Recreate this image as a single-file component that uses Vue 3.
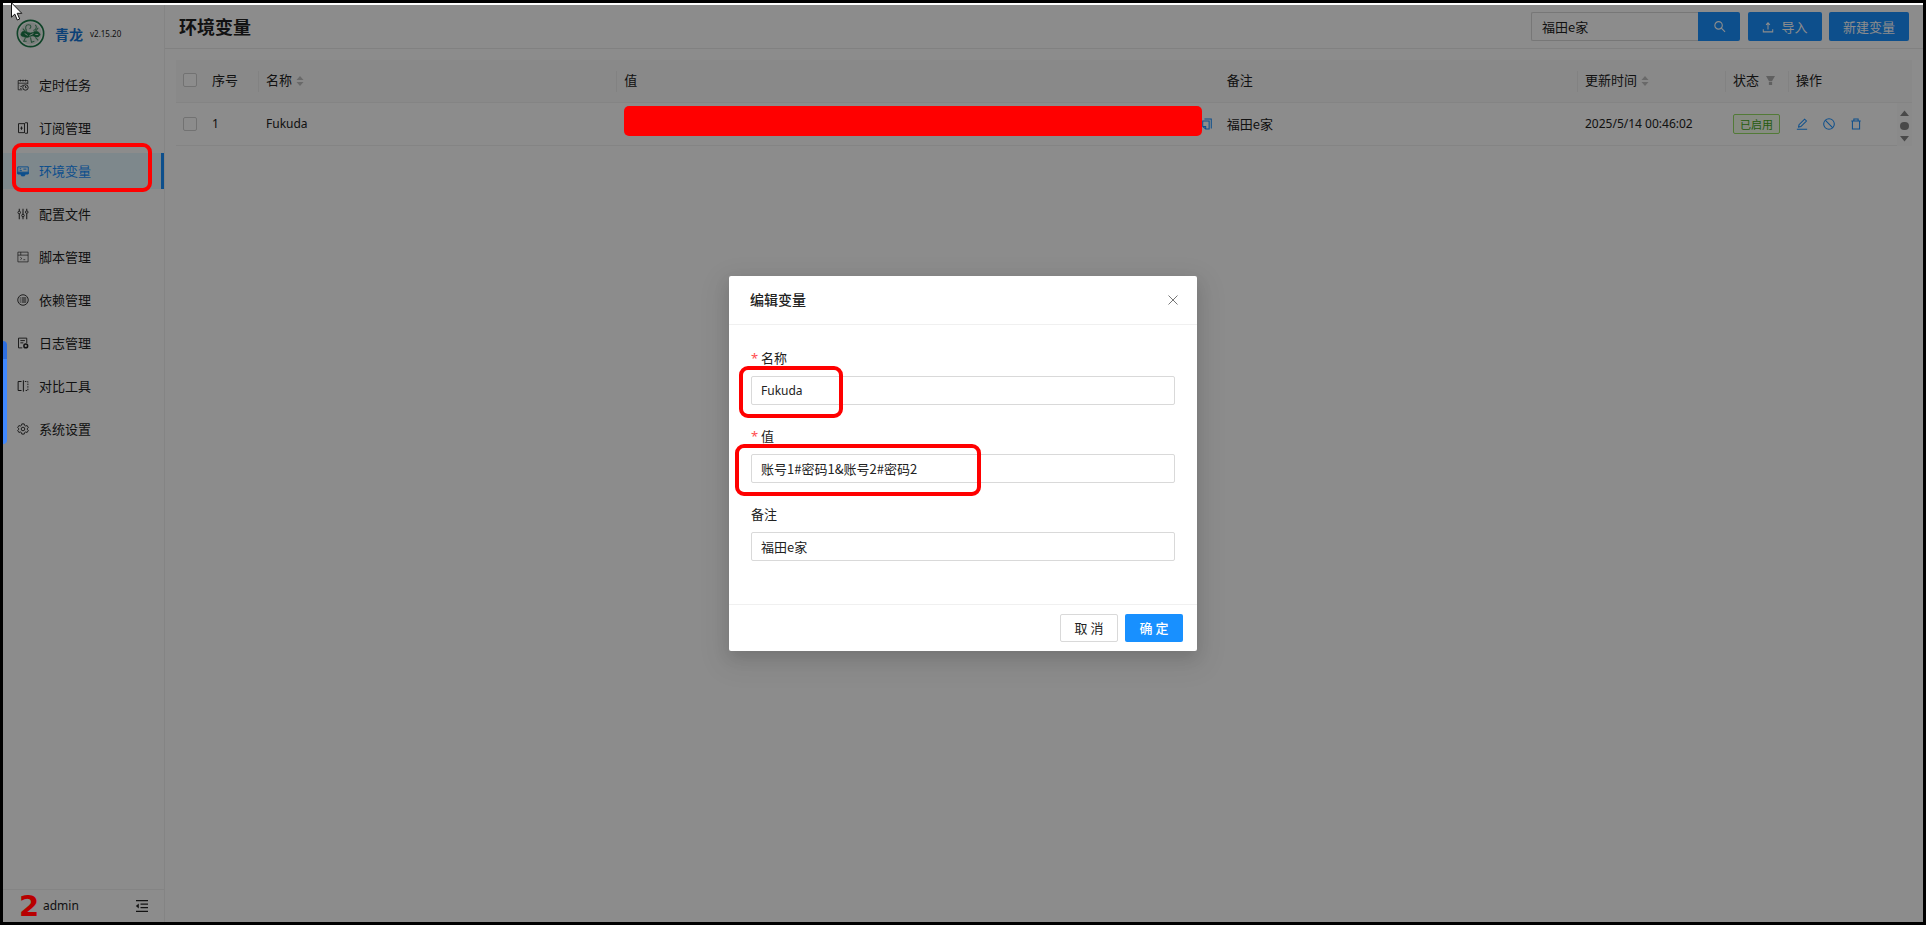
<script setup>
import { ref } from 'vue'

const menu = [
  { label: '定时任务', icon: 'task' },
  { label: '订阅管理', icon: 'subs' },
  { label: '环境变量', icon: 'env', active: true },
  { label: '配置文件', icon: 'config' },
  { label: '脚本管理', icon: 'script' },
  { label: '依赖管理', icon: 'deps' },
  { label: '日志管理', icon: 'log' },
  { label: '对比工具', icon: 'diff' },
  { label: '系统设置', icon: 'setting' },
]
const search = ref('福田e家')
const form = ref({ name: 'Fukuda', value: '账号1#密码1&账号2#密码2', remark: '福田e家' })
</script>

<template>
  <div class="screen">
    <div class="app">
      <aside class="sidebar">
        <div class="brand">
          <svg class="logo" viewBox="0 0 30 30" fill="none" stroke="#1d7a49">
            <circle cx="15" cy="15" r="13.6" stroke-width="1.7" />
            <circle cx="15" cy="15" r="11.4" fill="#dfe8e2" stroke="none" />
            <path d="M5 16c1-4 4-4 6-3 2 2 6 2 8 0 2-1 5 0 6 3-1 3-4 3-6 2-3-2-6 2-9 1-3-1-5-1-5-3z" fill="#1d7a49" stroke-width=".6" />
            <path d="M11 12C9 9 10 6 13 6c3 0 3 3 1 4M18 12c3-1 4-4 2-6M7 10l3 3M23 9l-3 4M10 19l-2 4 3 0M15 19l1 5 3-1M20 19l3 3" stroke="#4a9069" stroke-width="1.1" />
            <path d="M9 15l3 2M14 17l4-2M20 16h3" stroke="#dfe8e2" stroke-width="1" />
          </svg>
          <a class="name" href="#">青龙</a>
          <span class="version">v2.15.20</span>
        </div>
        <nav>
          <ul class="menu">
            <li v-for="m in menu" :key="m.label" :class="{ active: m.active }">
              <a href="#">
                <svg viewBox="0 0 16 16" fill="none" stroke="currentColor" stroke-width="1.2">
                  <template v-if="m.icon === 'task'">
                    <path d="M7 14.4H1.6V2h12.8v5M1.6 5.6h12.8M4.6.8v2.6M8 .8v2.6M11.4.8v2.6M4 9l1.5 1.5L8 7.5M4 12.5h2" stroke-width="1" />
                    <circle cx="11.3" cy="11.3" r="3.6" /><path d="M11.3 9.3v2.2h1.6" />
                  </template>
                  <template v-else-if="m.icon === 'subs'">
                    <path d="M2 2.2h8v12H2zM10 2.2l1-1.2h3v14h-3l-1-1M6 6v4.4M4.4 8.2h3.2" />
                  </template>
                  <template v-else-if="m.icon === 'env'">
                    <path d="M1 2.5h14v9H1zM3.5 5h2M3.5 7.5h3M8.5 5.5h4" stroke-width="1.3" />
                    <path d="M1 9.5h14v2.5h-4l-1 2.5H6L5 12H1z" fill="currentColor" />
                  </template>
                  <template v-else-if="m.icon === 'config'">
                    <path d="M3 1v3M3 8v7M8 1v7M8 12v3M13 1v2.5M13 7.5V15" stroke-width="1.3" />
                    <circle cx="3" cy="6" r="1.7" /><circle cx="8" cy="10" r="1.7" /><circle cx="13" cy="5.5" r="1.7" />
                  </template>
                  <template v-else-if="m.icon === 'script'">
                    <path d="M1.2 1.5h13.6v13H1.2zM1.2 5.5h13.6M5 1.5v4M4.5 8.5L6.5 10l-2 1.6M8.5 11.6H11" stroke-width=".9" />
                  </template>
                  <template v-else-if="m.icon === 'deps'">
                    <circle cx="8" cy="8" r="7" />
                    <path d="M3.6 5.4h1.4M6.2 5.4h6.2M3.6 8h1.4M6.2 8h6.2M3.6 10.6h1.4M6.2 10.6h6.2" stroke-width="1.5" />
                  </template>
                  <template v-else-if="m.icon === 'log'">
                    <path d="M7 14.5H2v-13h11V8M4.5 4.8h6M4.5 7.8h4" />
                    <circle cx="11.7" cy="11.9" r="2.5" stroke-width="2" />
                  </template>
                  <template v-else-if="m.icon === 'diff'">
                    <path d="M6 2H1.5v12H6M8.5.5v15" stroke-width="1.3" />
                    <path d="M10.5 2h4v12h-4" stroke-dasharray="2 1.4" />
                  </template>
                  <template v-else>
                    <path d="M6.4 1.2h3.2l.5 2 1.4.8 2-.6 1.6 2.8L13.6 7.6v.8l1.5 1.4-1.6 2.8-2-.6-1.4.8-.5 2H6.4l-.5-2-1.4-.8-2 .6L.9 9.8l1.5-1.4v-.8L.9 6.2l1.6-2.8 2 .6 1.4-.8z" />
                    <circle cx="8" cy="8" r="2.4" />
                  </template>
                </svg>
                <span>{{ m.label }}</span>
              </a>
              <i v-if="m.active" class="mark"></i>
            </li>
          </ul>
        </nav>
        <div class="user">
          <span class="avatar">2</span>
          <span class="who">admin</span>
          <button class="fold" aria-label="收起菜单">
            <svg viewBox="0 0 14 14" fill="none" stroke="currentColor" stroke-width="1.3">
              <path d="M1 1.7h12M5.5 5.2H13M5.5 8.7H13M1 12.3h12" /><path d="M3.8 4.6v4.8L.8 7z" fill="currentColor" stroke="none" />
            </svg>
          </button>
        </div>
      </aside>

      <main class="main">
        <header class="topbar">
          <h1>环境变量</h1>
          <form class="search" @submit.prevent>
            <input v-model="search" type="text" aria-label="搜索变量" />
            <button class="primary" aria-label="搜索">
              <svg viewBox="0 0 14 14" fill="none" stroke="currentColor" stroke-width="1.2"><circle cx="6" cy="5.8" r="4" /><path d="M9 8.800l4 4" /></svg>
            </button>
          </form>
          <button class="primary import">
            <svg viewBox="0 0 14 14" fill="none" stroke="currentColor" stroke-width="1.2"><path d="M1.5 9.5v3.2h11V9.5M7 10V2.500M4.800 4.500L7 2l2.200 2.500" /></svg>
            导入
          </button>
          <button class="primary create">新建变量</button>
        </header>

        <div class="list">
          <table>
            <colgroup>
              <col class="c-check" /><col class="c-index" /><col /><col class="c-value" /><col />
              <col class="c-time" /><col class="c-state" /><col class="c-ops" /><col class="c-bar" />
            </colgroup>
            <thead>
              <tr>
                <th><input type="checkbox" aria-label="全选" /></th>
                <th class="sep">序号</th>
                <th class="sep">名称 <svg class="sorter" viewBox="0 0 8 12"><path d="M4 1l3.5 4h-7zM4 11L.5 7h7z" /></svg></th>
                <th>值</th>
                <th class="sep">备注</th>
                <th class="sep">更新时间 <svg class="sorter" viewBox="0 0 8 12"><path d="M4 1l3.5 4h-7zM4 11L.5 7h7z" /></svg></th>
                <th class="sep">状态 <svg class="filter" viewBox="0 0 10 10"><path d="M0 0h10L6.8 5.500H3.200zM3.200 6.300h3.600V10H3.200z" /></svg></th>
                <th>操作</th>
                <th></th>
              </tr>
            </thead>
            <tbody>
              <tr>
                <td><input type="checkbox" aria-label="选择 Fukuda" /></td>
                <td class="latin">1</td>
                <td class="latin">Fukuda</td>
                <td class="value">
                  <i class="redact"></i>
                  <button class="link copy" aria-label="复制">
                    <svg viewBox="0 0 12 14" fill="none" stroke="currentColor" stroke-width="1.2"><path d="M3 1.200h8v11M1 3.500h7.500v9.300H4.500L1 10zM1 10h3.500v2.800" /></svg>
                  </button>
                </td>
                <td>福田e家</td>
                <td class="latin">2025/5/14 00:46:02</td>
                <td><span class="tag">已启用</span></td>
                <td>
                  <div class="ops">
                    <button class="link" aria-label="编辑"><svg viewBox="0 0 14 14" fill="none" stroke="currentColor" stroke-width="1.2"><path d="M1 13h12M3 10.500l.5-2.700L10 1.300l2.200 2.200-6.500 6.500z" /></svg></button>
                    <button class="link" aria-label="禁用"><svg viewBox="0 0 14 14" fill="none" stroke="currentColor" stroke-width="1.2"><circle cx="7" cy="7" r="6.2" /><path d="M2.600 2.600l8.800 8.800" /></svg></button>
                    <button class="link" aria-label="删除"><svg viewBox="0 0 14 14" fill="none" stroke="currentColor" stroke-width="1.2"><path d="M1.500 3.400h11M4.500 3.400V1.200h5v2.200M2.800 3.400v9.400h8.400V3.400" /></svg></button>
                  </div>
                </td>
                <td class="bar">
                  <svg viewBox="0 0 15 42"><path d="M7.500 6.500l4.500 5.500H3zM7.500 37.500L3 32h9z" /><rect x="3" y="18" width="9" height="8" rx="4" /></svg>
                </td>
              </tr>
            </tbody>
          </table>
        </div>
      </main>
    </div>

    <div class="mask">
      <section class="modal" role="dialog" aria-labelledby="dlg-title">
        <header>
          <h2 id="dlg-title">编辑变量</h2>
          <button class="close" aria-label="关闭"><svg viewBox="0 0 10 10" fill="none" stroke="currentColor"><path d="M.5.5l9 9M9.5.5l-9 9" /></svg></button>
        </header>
        <div class="body">
          <div class="field">
            <label class="required" for="f-name">名称</label>
            <input id="f-name" v-model="form.name" class="latin" type="text" />
            <i class="mark m-name"></i>
          </div>
          <div class="field">
            <label class="required" for="f-value">值</label>
            <input id="f-value" v-model="form.value" type="text" />
            <i class="mark m-value"></i>
          </div>
          <div class="field">
            <label for="f-remark">备注</label>
            <input id="f-remark" v-model="form.remark" type="text" />
          </div>
        </div>
        <footer>
          <button class="cancel">取 消</button>
          <button class="primary ok">确 定</button>
        </footer>
      </section>
    </div>

    <i class="dock"></i>
    <svg class="cursor" viewBox="0 0 12 19"><path d="M.5.8v14.400l3.300-3.100 2.500 5.900 2.400-1-2.500-5.700h4.600z" fill="#fff" stroke="#111" /></svg>
  </div>
</template>

<style>
body { background: #000; }
</style>

<style scoped>
* { box-sizing: border-box; }
.screen {
  position: relative;
  min-height: 100vh;
  border: 3px solid #000;
  padding-top: 2px;
  display: flex;
  background: #fff;
  color: #222;
  font: 13px/20px "Noto Sans CJK SC", sans-serif;
}
.app { display: flex; flex: 1; }
button, input { font: inherit; color: inherit; margin: 0; }
button { border: 0; padding: 0; background: none; display: flex; align-items: center; justify-content: center; }
a { color: inherit; text-decoration: none; }
i { display: block; }

.sidebar { width: 162px; border-right: 1px solid #f0f0f0; display: flex; flex-direction: column; }
.brand { display: flex; align-items: center; height: 57px; padding-left: 13px; }
.logo { width: 29px; height: 29px; }
.name { color: #1677d8; font-size: 14px; font-weight: 700; margin-left: 10px; }
.version { font-family: "Noto Sans", sans-serif; font-size: 8px; margin-left: 7px; }
.menu { list-style: none; margin: 0; padding: 5px 0 0; display: grid; gap: 7px; }
.menu li { position: relative; }
.menu a { display: flex; align-items: center; gap: 10px; height: 36px; padding: 0 0 1px 14px; }
.menu svg { width: 12px; height: 12px; }
.menu .active a { background: #e6f7ff; color: #1890ff; border-right: 3px solid #1890ff; }
.user { margin-top: auto; border-top: 1px solid #f0f0f0; height: 33px; display: flex; align-items: center; padding: 0 15px 0 16px; }
.avatar { position: relative; z-index: 20; color: #b80000; font: 700 29px/29px "DejaVu Sans", sans-serif; width: 24px; }
.who { font-family: "Noto Sans", sans-serif; font-size: 12px; }
.fold { margin-left: auto; }
.fold svg { width: 14px; height: 14px; }

.main { flex: 1; min-width: 0; }
.topbar { height: 44px; border-bottom: 1px solid #ebebeb; display: flex; align-items: center; padding: 0 14px; }
h1 { margin: 0 auto 0 0; padding-bottom: 2px; font-size: 18px; line-height: 28px; font-weight: 700; }
.search { display: flex; }
.search input { width: 167px; height: 29px; border: 1px solid #d9d9d9; border-right: 0; padding: 0 10px; background: #fff; border-radius: 2px 0 0 2px; }
.primary { background: #1890ff; color: #fff; height: 29px; border-radius: 2px; }
.search button { width: 42px; border-radius: 0 2px 2px 0; }
.search svg { width: 13px; height: 13px; }
.import { width: 74px; margin: 0 7px 0 8px; gap: 7px; }
.import svg { width: 12px; height: 12px; }
.create { width: 80px; }

.list { padding: 11px 11px 0; }
table { width: 100%; table-layout: fixed; border-collapse: separate; border-spacing: 0; }
.c-check { width: 29px; }
.c-index { width: 54px; }
.c-value { width: 34.7%; }
.c-time { width: 148px; }
.c-state { width: 63px; }
.c-ops { width: 108px; }
.c-bar { width: 15px; }
th, td { height: 43px; padding: 0 7px; text-align: left; font-weight: 400; border-bottom: 1px solid #f0f0f0; position: relative; white-space: nowrap; }
th { background: #fafafa; padding-bottom: 2px; }
.latin { font-family: "Noto Sans", sans-serif; font-size: 12px; }
th.sep::after { content: ""; position: absolute; right: 0; top: 11px; height: 21px; width: 1px; background: #ededed; }
td input[type=checkbox], th input[type=checkbox] { appearance: none; display: block; width: 14px; height: 14px; border: 1px solid #d0d0d0; border-radius: 2px; background: #fff; }
.sorter { width: 8px; height: 12px; fill: #bfbfbf; vertical-align: -2px; margin-left: 1px; }
.filter { width: 9px; height: 9px; fill: #b0b0b0; margin-left: 4px; }
.tag { display: inline-block; border: 1px solid #95de64; background: #f6ffed; color: #45a81a; font-size: 11px; line-height: 18px; padding: 0 6px; border-radius: 2px; }
.link { color: #1890ff; }
.link svg { width: 12px; height: 12px; }
.ops { display: flex; gap: 15px; }
.redact { position: absolute; z-index: 20; left: 7px; right: 18px; top: 3px; height: 30px; border-radius: 5px; background: #f00; }
.copy { margin-left: auto; }
.bar { padding: 0; border: 0; background: #fcfcfc; }
.bar svg { display: block; width: 15px; height: 42px; fill: #868686; }

.mask { position: absolute; z-index: 10; inset: 2px 0 0; background: rgba(0, 0, 0, .45); display: flex; align-items: center; justify-content: center; }
.modal { width: 468px; background: #fff; border-radius: 2px; box-shadow: 0 6px 16px rgba(0, 0, 0, .12), 0 9px 28px 8px rgba(0, 0, 0, .06); }
.modal header { height: 49px; padding: 0 19px 0 21px; border-bottom: 1px solid #f0f0f0; display: flex; align-items: center; justify-content: space-between; }
h2 { margin: 0; padding-bottom: 2px; font-size: 14px; line-height: 22px; font-weight: 500; }
.close { color: #777; }
.close svg { width: 10px; height: 10px; }
.body { padding: 23px 22px 43px; display: grid; gap: 21px; }
.field { position: relative; display: grid; gap: 8px; }
.required::before { content: "*"; color: #ff4d4f; font-family: "Noto Sans", sans-serif; display: inline-block; width: 10px; }
.field input { width: 100%; height: 29px; border: 1px solid #d9d9d9; border-radius: 2px; padding: 0 9px; background: #fff; }
.field input.latin { font-family: "Noto Sans", sans-serif; font-size: 12px; }
.modal footer { border-top: 1px solid #f0f0f0; height: 47px; display: flex; align-items: center; justify-content: flex-end; gap: 7px; padding: 0 14px; }
.modal footer button { width: 58px; height: 28px; border-radius: 2px; }
.modal footer .cancel { border: 1px solid #d9d9d9; }
.ok { font-weight: 500; }

.mark { position: absolute; z-index: 20; border: 4px solid #f00; border-radius: 9px; pointer-events: none; }
.menu .mark { left: 9px; right: 12px; top: -10px; bottom: -3px; }
.m-name { left: -12px; top: 18px; width: 104px; height: 52px; }
.m-value { left: -16px; top: 18px; width: 246px; height: 52px; }

.dock { position: absolute; z-index: 20; left: 0; top: 338px; width: 4px; height: 103px; border-radius: 0 4px 4px 0; background: linear-gradient(#2f6fe0 18px, #4088ff 18px); }
.cursor { position: absolute; z-index: 30; left: 8px; top: -1px; width: 12px; height: 19px; }
</style>
